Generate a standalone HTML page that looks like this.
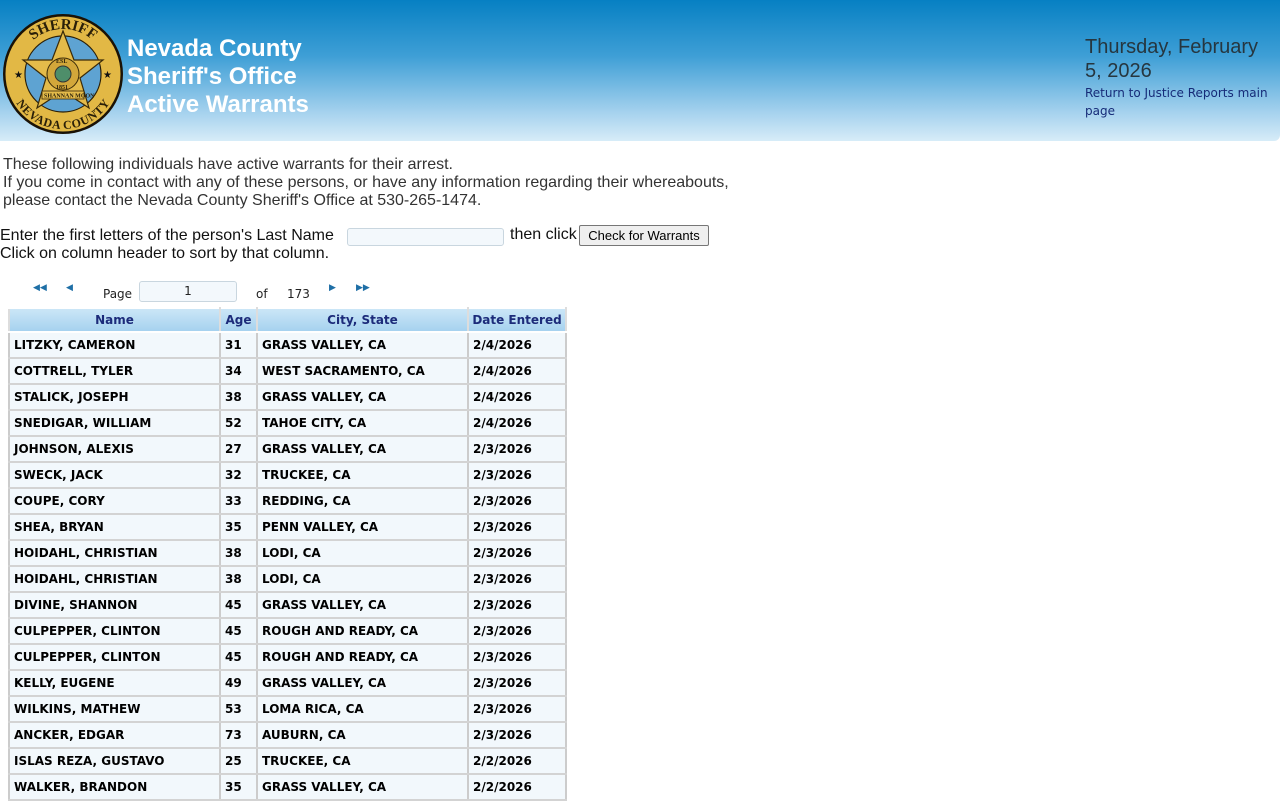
<!DOCTYPE html>
<html><head><meta charset="utf-8"><style>
body{margin:0;width:1280px;height:800px;overflow:hidden;background:#fff;font-family:"Liberation Sans",Arial,sans-serif;position:relative}
.hdr{position:absolute;left:0;top:0;width:1280px;height:141px;background:linear-gradient(#0680c3 0%,#3f9fd6 40%,#a6d2ee 80%,#d7ecf8 100%);border-bottom-right-radius:6px}
.title{position:absolute;left:127px;top:35px;color:#fff;font-weight:bold;font-size:24px;line-height:28px}
.date{position:absolute;left:1085px;top:35px;color:#26363f;font-size:20px;line-height:24px}
.lnk{position:absolute;left:1085px;top:84px;color:#162b78;font-family:"DejaVu Sans",Verdana,sans-serif;font-size:12px;line-height:18px}
.intro{position:absolute;left:3px;top:156px;color:#333;font-size:16px;line-height:18px}
.srch{position:absolute;left:0;top:227px;color:#111;font-size:16px;line-height:18px}
.inp{position:absolute;left:347px;top:228px;width:155px;height:16px;border:1px solid #c9d6df;border-radius:3px;background:#f3f8fc}
.btn{position:absolute;left:579px;top:225px;width:128px;height:19px;border:1px solid #767676;border-radius:2px;background:#efefef;font-size:13px;line-height:19px;text-align:center;color:#000}
.pg{position:absolute;top:282px;font-family:"DejaVu Sans",Verdana,sans-serif;font-size:12px;color:#222}
.pbox{position:absolute;left:139px;top:281px;width:96px;height:19px;border:1px solid #c9d6df;border-radius:3px;background:#f3f8fc;font-family:"DejaVu Sans",sans-serif;font-size:12px;text-align:center;line-height:19px;color:#222}
table{position:absolute;left:8px;top:307px;border-collapse:collapse;font-family:"DejaVu Sans",Verdana,sans-serif;font-size:12px;font-weight:bold}
td,th{border:2px solid #d5d5d5;height:24px;padding:0 0 0 4px;text-align:left;white-space:nowrap}
th{height:22px;background:linear-gradient(#cbe6f7,#a6d2ef);color:#1c2b7a;text-align:center;padding:0;border-color:#fff #ddd}
td{background:#f2f8fc;color:#000;border-color:#d3d3d3 #ccc}
</style></head><body>
<div class="hdr"></div>
<svg style="position:absolute;left:2px;top:13px" width="122" height="122" viewBox="0 0 122 122">
<defs><path id="tp" d="M16,61 A45,45 0 0 1 106,61"/><path id="bp" d="M10,61 A51,51 0 0 0 112,61"/></defs>
<circle cx="61" cy="61" r="60" fill="#1a1206"/>
<circle cx="61" cy="61" r="57.5" fill="#e2b845"/>
<circle cx="61" cy="61" r="38" fill="#5ea3d2" stroke="#2a1f08" stroke-width="1.2"/>
<polygon points="61,18 72,47 101,47 78,65 87,95 61,78 35,95 44,65 21,47 50,47" fill="#e4bb4a" stroke="#3a2a08" stroke-width="1.2"/>
<circle cx="61" cy="61" r="16" fill="#d3a73a" stroke="#3a2a08"/>
<circle cx="61" cy="61" r="8" fill="#4e8e6a" stroke="#333"/>
<text font-family="Liberation Serif,serif" font-size="6" font-weight="bold" x="54" y="50" fill="#2a1f08">ESL</text>
<text font-family="Liberation Serif,serif" font-size="6" font-weight="bold" x="54" y="76" fill="#2a1f08">1851</text>
<rect x="40" y="78" width="42" height="8" fill="#e4bb4a" stroke="#3a2a08" stroke-width=".8"/>
<text font-family="Liberation Serif,serif" font-size="6" font-weight="bold" x="42" y="84.5" fill="#2a1f08">SHANNAN MOON</text>
<text font-family="Liberation Serif,serif" font-size="15" font-weight="bold" fill="#2a1f08"><textPath href="#tp" startOffset="50%" text-anchor="middle">SHERIFF</textPath></text>
<text font-family="Liberation Serif,serif" font-size="12" font-weight="bold" fill="#2a1f08" dy="4"><textPath href="#bp" startOffset="50%" text-anchor="middle">NEVADA COUNTY</textPath></text>
<text x="12" y="65" font-size="10" fill="#111">★</text><text x="101" y="65" font-size="10" fill="#111">★</text>
</svg>
<div class="title">Nevada County<br>Sheriff's Office<br>Active Warrants</div>
<div class="date">Thursday, February<br>5, 2026</div>
<div class="lnk">Return to Justice Reports main<br>page</div>
<div class="intro">These following individuals have active warrants for their arrest.<br>If you come in contact with any of these persons, or have any information regarding their whereabouts,<br>please contact the Nevada County Sheriff's Office at 530-265-1474.</div>
<div class="srch">Enter the first letters of the person's Last Name<br>Click on column header to sort by that column.</div>
<div class="inp"></div>
<div class="srch" style="left:510px;top:226px">then click</div>
<div class="btn">Check for Warrants</div>
<div class="pg" style="left:33px;color:#1f6fa6;font-size:9px;top:283px">◀◀</div>
<div class="pg" style="left:66px;color:#1f6fa6;font-size:9px;top:283px">◀</div>
<div class="pg" style="left:103px;top:287px">Page</div>
<div class="pbox">1</div>
<div class="pg" style="left:256px;top:287px">of</div>
<div class="pg" style="left:287px;top:287px">173</div>
<div class="pg" style="left:329px;color:#1f6fa6;font-size:9px;top:283px">▶</div>
<div class="pg" style="left:356px;color:#1f6fa6;font-size:9px;top:283px">▶▶</div>
<table>
<tr><th style="width:209px">Name</th><th style="width:35px">Age</th><th style="width:209px">City, State</th><th style="width:96px">Date Entered</th></tr>
<tr><td>LITZKY, CAMERON</td><td>31</td><td>GRASS VALLEY, CA</td><td>2/4/2026</td></tr>
<tr><td>COTTRELL, TYLER</td><td>34</td><td>WEST SACRAMENTO, CA</td><td>2/4/2026</td></tr>
<tr><td>STALICK, JOSEPH</td><td>38</td><td>GRASS VALLEY, CA</td><td>2/4/2026</td></tr>
<tr><td>SNEDIGAR, WILLIAM</td><td>52</td><td>TAHOE CITY, CA</td><td>2/4/2026</td></tr>
<tr><td>JOHNSON, ALEXIS</td><td>27</td><td>GRASS VALLEY, CA</td><td>2/3/2026</td></tr>
<tr><td>SWECK, JACK</td><td>32</td><td>TRUCKEE, CA</td><td>2/3/2026</td></tr>
<tr><td>COUPE, CORY</td><td>33</td><td>REDDING, CA</td><td>2/3/2026</td></tr>
<tr><td>SHEA, BRYAN</td><td>35</td><td>PENN VALLEY, CA</td><td>2/3/2026</td></tr>
<tr><td>HOIDAHL, CHRISTIAN</td><td>38</td><td>LODI, CA</td><td>2/3/2026</td></tr>
<tr><td>HOIDAHL, CHRISTIAN</td><td>38</td><td>LODI, CA</td><td>2/3/2026</td></tr>
<tr><td>DIVINE, SHANNON</td><td>45</td><td>GRASS VALLEY, CA</td><td>2/3/2026</td></tr>
<tr><td>CULPEPPER, CLINTON</td><td>45</td><td>ROUGH AND READY, CA</td><td>2/3/2026</td></tr>
<tr><td>CULPEPPER, CLINTON</td><td>45</td><td>ROUGH AND READY, CA</td><td>2/3/2026</td></tr>
<tr><td>KELLY, EUGENE</td><td>49</td><td>GRASS VALLEY, CA</td><td>2/3/2026</td></tr>
<tr><td>WILKINS, MATHEW</td><td>53</td><td>LOMA RICA, CA</td><td>2/3/2026</td></tr>
<tr><td>ANCKER, EDGAR</td><td>73</td><td>AUBURN, CA</td><td>2/3/2026</td></tr>
<tr><td>ISLAS REZA, GUSTAVO</td><td>25</td><td>TRUCKEE, CA</td><td>2/2/2026</td></tr>
<tr><td>WALKER, BRANDON</td><td>35</td><td>GRASS VALLEY, CA</td><td>2/2/2026</td></tr>
</table>
</body></html>
